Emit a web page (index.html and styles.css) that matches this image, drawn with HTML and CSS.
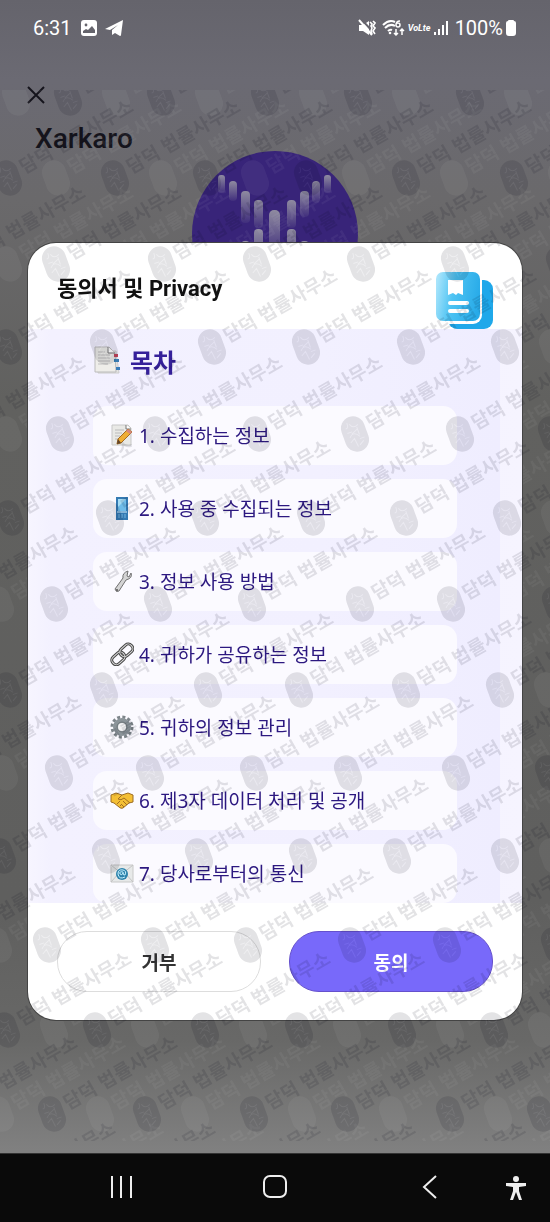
FILE: index.html
```html
<!DOCTYPE html>
<html lang="ko">
<head>
    <meta charset="UTF-8">
    <meta name="viewport" content="width=device-width, initial-scale=1.0">
    <title>Xarkaro</title>
    <link rel="stylesheet" href="styles.css">
</head>
<body>
    <div class="screen">
        <div class="status-bar">
            <span class="time">6:31</span>
            <svg class="status-photo" width="18" height="18" viewBox="0 0 18 18"><rect x="1" y="1" width="16" height="16" rx="3" fill="#fff"/><circle cx="6" cy="6" r="1.4" fill="#65646c"/><path d="M3 14v-2l3-2 2 1 4-4 3 4v3z" fill="#65646c"/></svg>
            <svg width="20" height="18" viewBox="0 0 20 18"><path d="M1 10L19 1l-2 15q0 1-1 1l-5-3-3 2v-5l6-5-8 5z" fill="#fff"/></svg>
            <span class="spacer"></span>
            <svg width="18" height="18" viewBox="0 0 18 18"><path d="M1 6h4l6-4v14l-6-4H1z" fill="#fff"/><path d="M3 0l14 15" stroke="#65646c" stroke-width="2"/><path d="M1 1l13 15" stroke="#fff" stroke-width="2"/><path d="M12 3l2 2-1 2 1 2-1 3 1 3M15 2l2 2-2 3 2 2-2 3 2 3" fill="none" stroke="#fff" stroke-width="1.6"/></svg>
            <svg class="wifi" width="24" height="18" viewBox="0 0 24 18"><path d="M2 6Q8 0 14 3M4 9q5-5 10-2M7 12q2-2 4-1" fill="none" stroke="#fff" stroke-width="2"/><circle cx="9" cy="14" r="1.3" fill="#fff"/><path d="M19 2q-4 0-4 4 0 2 2 2t2-2-2-2-2 1M15 10v6m-2-2l2 2 2-2M21 16v-6m-2 2l2-2 2 2" fill="none" stroke="#fff" stroke-width="1.5"/></svg>
            <span class="volte">VoLte</span>
            <svg width="16" height="18" viewBox="0 0 16 18"><path d="M2 13v3M6 10v6M10 6v10M14 2v14" stroke="#fff" stroke-width="2"/></svg>
            <span class="battery">100%</span>
            <svg width="12" height="18" viewBox="0 0 12 18"><path d="M3 2q0-1 1-1h4q1 0 1 1 2 0 2 2v10q0 3-3 3H4q-3 0-3-3V4q0-2 2-2z" fill="#fff"/></svg>
        </div>

        <main class="app">
            <button class="close" aria-label="닫기"><svg width="18" height="18" viewBox="0 0 18 18"><path d="M1 1l16 16M17 1L1 17" stroke="#15141c" stroke-width="2"/></svg></button>
            <h1>Xarkaro</h1>
            <svg class="logo" width="166" height="166" viewBox="0 0 166 166">
                <defs>
                    <linearGradient id="bar" x1="0" y1="0" x2="0" y2="1"><stop offset="0" stop-color="#8f8ba0"/><stop offset="1" stop-color="#8f8ba0" stop-opacity="0.1"/></linearGradient>
                </defs>
                <circle cx="83" cy="83" r="83" fill="#382479"/>
                <g fill="url(#bar)">
                    <rect x="26" y="24" width="7" height="18" rx="3"/>
                    <rect x="37" y="30" width="8" height="20" rx="4"/>
                    <rect x="49" y="40" width="9" height="32" rx="4"/>
                    <rect x="62" y="49" width="9" height="28" rx="4"/>
                    <rect x="77" y="59" width="11" height="44" rx="5"/>
                    <rect x="95" y="49" width="9" height="28" rx="4"/>
                    <rect x="108" y="40" width="9" height="26" rx="4"/>
                    <rect x="120" y="30" width="8" height="22" rx="4"/>
                    <rect x="132" y="24" width="7" height="18" rx="3"/>
                    <rect x="62" y="78" width="9" height="40" rx="4"/>
                    <rect x="95" y="78" width="9" height="40" rx="4"/>
                    <rect x="49" y="90" width="9" height="30" rx="4"/>
                    <rect x="108" y="90" width="9" height="30" rx="4"/>
                </g>
            </svg>
        </main>

        <nav class="nav-bar">
            <button aria-label="최근 앱"><svg width="24" height="24" viewBox="0 0 24 24"><path d="M3 1v22M12 1v22M22 1v22" stroke="#eee" stroke-width="2"/></svg></button>
            <button aria-label="홈"><svg width="24" height="24" viewBox="0 0 24 24"><rect x="1" y="1" width="22" height="21" rx="6" fill="none" stroke="#eee" stroke-width="2"/></svg></button>
            <button aria-label="뒤로"><svg width="24" height="24" viewBox="0 0 24 24"><path d="M19 1L7 12l12 11" fill="none" stroke="#eee" stroke-width="2"/></svg></button>
            <button class="access" aria-label="접근성"><svg width="20" height="25" viewBox="0 0 20 25"><circle cx="10" cy="3" r="3" fill="#eee"/><path d="M0 7h20v3l-7 1v4l3 9h-3l-3-8-3 8H4l3-9v-4l-7-1z" fill="#eee"/></svg></button>
        </nav>
    </div>

    <svg class="watermark" aria-hidden="true">
        <defs>
            <g id="stamp">
                <g transform="rotate(-20)">
                    <rect x="-12" y="-18" width="24" height="36" rx="12"/>
                    <path d="M-7-8q3 1 3-5M-2-11q2 6 8 3M-7-3h5M4-6v8M-6 2q5-6 10 2M-7 7l5-3 1 9M3 6h5M1 12l5-3M-3-1l7-3" class="stamp-lines"/>
                </g>
                <text x="16" y="5" transform="rotate(-30)">담덕 법률사무소</text>
            </g>
        </defs>
        <g id="lightMarks" class="light-marks"></g>
    </svg>

    <div class="backdrop">
        <section class="dialog" role="dialog" aria-labelledby="dialogTitle">
            <header class="dialog-header">
                <h2 id="dialogTitle">동의서 및 Privacy</h2>
                <svg width="58" height="58" viewBox="0 0 58 58">
                    <defs>
                        <linearGradient id="book" x1="0" y1="0.3" x2="1" y2="0.5"><stop offset="0" stop-color="#a9e4fb"/><stop offset="0.4" stop-color="#4dc3f3"/><stop offset="1" stop-color="#27aae8"/></linearGradient>
                    </defs>
                    <rect x="13" y="8" width="45" height="49" rx="9" fill="#1fa8ea"/>
                    <rect x="0" y="-2" width="47" height="54" rx="9" fill="#fff"/>
                    <rect x="1" y="0" width="44" height="49" rx="7" fill="url(#book)"/>
                    <path d="M13 8h15v15l-5-2-2 2-3-2-5 2z" fill="#fff"/>
                    <path d="M15 31h17M15 39h17" stroke="#fff" stroke-width="4" stroke-linecap="round"/>
                </svg>
            </header>

            <div class="terms">
                <div class="terms-inner">
                    <h3>
                        <svg width="30" height="30" viewBox="0 0 30 30"><path d="M5 5h18l3 22H5z" fill="#e4e4e2" stroke="#ccc"/><path d="M2 1h14l6 6 1 19H2z" fill="#eeede9" stroke="#bbb"/><path d="M15 1v6h7" fill="#fff" stroke="#777"/><path d="M5 6h7M5 9h12M5 12h12M5 15h12M5 18h10" stroke="#bfbfbf"/><path d="M21 8h4v3h-4z" fill="#c3455a"/><path d="M21 13h5v3h-5z" fill="#377bb0"/><path d="M23 21h4v3h-4z" fill="#397ebb"/></svg>
                        목차
                    </h3>
                    <ul>
                        <li><a href="#s1"><svg width="24" height="24" viewBox="0 0 24 24"><path d="M2 2h16l3 3v17H2z" fill="#e9e9e6" stroke="#c7c7c7"/><path d="M16 2v4h5" fill="#fff" stroke="#777"/><path d="M5 7h9M5 10h7M5 13h5M5 16h4" stroke="#bbb"/><path d="M18 6l4 3-11 11-4 1 1-5z" fill="#efae35" stroke="#a56b23"/><path d="M18 6l4 3-2 2-4-3z" fill="#d6867e"/><path d="M8 16l3 4-4 1z" fill="#61452a"/></svg>1. 수집하는 정보</a></li>
                        <li><a href="#s2"><svg width="24" height="24" viewBox="0 0 24 24"><rect x="6" y="1" width="12" height="23" fill="#347ab3"/><path d="M8 3h8v12H8z" fill="#6fbce9"/><path d="M8 3h8L8 11z" fill="#a5dcf5"/><path d="M7 16h10" stroke="#d3efff"/><path d="M8 19h8M8 21h8" stroke="#75b5df" stroke-dasharray="2 1"/></svg>2. 사용 중 수집되는 정보</a></li>
                        <li><a href="#s3"><svg width="24" height="24" viewBox="0 0 24 24"><path d="M5 20l8-11q-1-5 5-7l-1 5 2 1 2-4q2 5-5 7L9 22q-3 2-4-2z" fill="#d4d4d4" stroke="#707070"/><circle cx="7" cy="21" r="1" fill="#555"/></svg>3. 정보 사용 방법</a></li>
                        <li><a href="#s4"><svg width="24" height="24" viewBox="0 0 24 24"><g fill="none" stroke="#454545" stroke-width="3"><rect x="9" y="4" width="14" height="9" rx="4" transform="rotate(-42 16 8)"/><rect x="1" y="12" width="14" height="9" rx="4" transform="rotate(-42 8 16)"/></g><g fill="none" stroke="#ddd"><rect x="9" y="4" width="14" height="9" rx="4" transform="rotate(-42 16 8)"/><rect x="1" y="12" width="14" height="9" rx="4" transform="rotate(-42 8 16)"/></g></svg>4. 귀하가 공유하는 정보</a></li>
                        <li><a href="#s5"><svg width="24" height="24" viewBox="0 0 24 24"><circle cx="12" cy="12" r="10" fill="none" stroke="#7d858a" stroke-width="3" stroke-dasharray="3 2.24"/><circle cx="12" cy="12" r="6" fill="none" stroke="#8b9499" stroke-width="6"/><circle cx="12" cy="12" r="5" fill="none" stroke="#6f777b"/><circle cx="12" cy="12" r="4" fill="#f3f3f4"/></svg>5. 귀하의 정보 관리</a></li>
                        <li><a href="#s6"><svg width="24" height="24" viewBox="0 0 24 24"><path d="M1 7l5-2 6 2 6-2 5 2v7l-4 1-6 5q-2 1-4-1l-5-4-3-1z" fill="#f4bf35" stroke="#9c6c24"/><path d="M12 7l-4 4q3 2 6-1l6 5M10 18l2-2M7 16l3-3M14 19l-3-3M17 17l-4-4" fill="none" stroke="#a16e22"/></svg>6. 제3자 데이터 처리 및 공개</a></li>
                        <li><a href="#s7"><svg width="24" height="24" viewBox="0 0 24 24"><path d="M1 4h22v17H1z" fill="#e7e9e9" stroke="#c8c8c8"/><path d="M1 4l11 9 11-9M1 21l9-10M23 21l-9-10" fill="none" stroke="#c4c4c4"/><circle cx="12" cy="13" r="6" fill="#2e83ac"/><path d="M15 16q-6 3-7-3 0-5 5-4 4 1 2 5-2 1-2-3-4-1-3 2 2 2 3-1" fill="none" stroke="#c6f1ff"/></svg>7. 당사로부터의 통신</a></li>
                    </ul>
                </div>
            </div>

            <footer class="dialog-footer">
                <button class="button decline">거부</button>
                <button class="button agree">동의</button>
            </footer>
        </section>
    </div>

    <svg class="watermark" aria-hidden="true">
        <g id="darkMarks" class="dark-marks"></g>
    </svg>

    <script>
        // stamp centres, one entry per row: y, then the x positions
        var rows = [
            [98, [-32, 68, 161, 265, 358, 470]],
            [178, [8, 115, 207, 308, 406, 514]],
            [264, [-40, 56, 162, 257, 361, 455, 560]],
            [347, [8, 104, 212, 306, 411, 505]],
            [434, [-40, 60, 157, 257, 355, 460, 552]],
            [518, [10, 110, 205, 311, 404, 507]],
            [604, [-48, 54, 158, 252, 360, 451, 556]],
            [690, [8, 104, 208, 299, 406, 500]],
            [773, [-44, 59, 150, 254, 348, 456, 549]],
            [856, [2, 106, 199, 303, 397, 505]],
            [945, [-50, 47, 155, 248, 352, 447, 555]],
            [1030, [6, 97, 205, 299, 402, 494]],
            [1114, [-48, 52, 147, 254, 345, 450, 541]],
            [1200, [-10, 90, 195, 290, 400, 490]]
        ];

        function drawMarks(id, shift) {
            var group = document.getElementById(id);
            rows.forEach(function(row) {
                row[1].forEach(function(x) {
                    var mark = document.createElementNS("http://www.w3.org/2000/svg", "use");
                    mark.setAttribute("href", "#stamp");
                    mark.setAttribute("x", x + shift);
                    mark.setAttribute("y", row[0]);
                    group.appendChild(mark);
                });
            });
        }

        drawMarks("lightMarks", 48);
        drawMarks("darkMarks", 0);
    </script>
</body>
</html>
```
FILE: styles.css
```css
* {
    box-sizing: border-box;
}
body {
    margin: 0;
    font-family: Roboto, "Noto Sans CJK KR", sans-serif;
    background-color: #0a0a0a;
}
h1, h2, h3, ul {
    margin: 0;
    padding: 0;
}
button {
    font-family: inherit;
    cursor: pointer;
}
svg {
    display: block;
    flex-shrink: 0;
}
.screen {
    display: flex;
    flex-direction: column;
    min-height: 100vh;
    background: linear-gradient(#65646c 0, #6b6a73 80px, #6a696b 200px, #61615f 400px, #5f5f5e 900px, #686867 1040px, #808080 1150px);
}
.status-bar {
    display: flex;
    align-items: center;
    height: 56px;
    padding: 0 33px;
    color: #fff;
    font-size: 20px;
}
.status-photo {
    margin: 0 6px 0 8px;
}
.spacer {
    flex: 1;
}
.wifi {
    margin: 0 3px 0 5px;
}
.volte {
    width: 25px;
    font-size: 9px;
    font-style: italic;
    font-weight: bold;
}
.battery {
    margin: 0 2px 0 6px;
}
.app {
    flex: 1;
    padding: 30px 27px 0;
}
.close {
    display: block;
    padding: 0;
    border: none;
    background: none;
}
h1 {
    padding: 18px 0 0 8px;
    font-size: 28px;
    line-height: 34px;
    font-weight: 500;
    color: #15141c;
}
.logo {
    margin: -5px auto 0;
}
.nav-bar {
    position: relative;
    display: grid;
    grid-template-columns: repeat(3, 1fr);
    height: 69px;
    padding: 0 44px 3px;
    border-top: 1px solid #333;
    background-color: #0a0a0a;
}
.nav-bar button {
    display: flex;
    align-items: center;
    justify-content: center;
    padding: 0;
    border: none;
    background: none;
}
.nav-bar .access {
    position: absolute;
    right: 24px;
    top: 22px;
}
.watermark {
    position: absolute;
    top: 0;
    left: 0;
    width: 100%;
    height: 100vh;
    clip-path: inset(90px 0 81px 0);
    pointer-events: none;
    font-family: "Noto Sans CJK KR", sans-serif;
    font-size: 19px;
    font-weight: bold;
}
.stamp-lines {
    fill: none;
    stroke: #fff;
    stroke-opacity: 0.4;
}
.dark-marks {
    fill: #000018;
    opacity: 0.11;
}
.light-marks {
    fill: #fff;
    opacity: 0.05;
}
.backdrop {
    position: absolute;
    top: 0;
    left: 0;
    display: flex;
    align-items: center;
    width: 100%;
    height: 100vh;
    padding: 41px 28px 0;
}
.dialog {
    width: 100%;
    overflow: hidden;
    border-radius: 28px;
    background-color: #fff;
    box-shadow: 0 0 0 1px #444;
}
.dialog-header {
    display: flex;
    align-items: flex-start;
    justify-content: space-between;
    height: 86px;
    padding: 29px 29px 0;
}
h2 {
    font-size: 22px;
    line-height: 34px;
    color: #111;
}
.terms {
    height: 47vh;
    padding: 0 22px;
    overflow: hidden;
    background: linear-gradient(90deg, #f7f5ff, #f0eeff 40px, #f6f4ff);
}
.terms-inner {
    padding: 14px 43px;
    background: linear-gradient(90deg, #f3f1ff, #f2f0ff 60%, #efedff);
}
h3 {
    display: flex;
    align-items: center;
    gap: 7px;
    height: 36px;
    margin-bottom: 27px;
    font-size: 25px;
    color: #35209a;
}
ul {
    display: flex;
    flex-direction: column;
    gap: 14px;
    list-style: none;
}
li a {
    display: flex;
    align-items: center;
    gap: 5px;
    height: 59px;
    padding: 0 17px;
    border-radius: 14px;
    background-color: #fbfaff;
    font-family: "Noto Sans", "Noto Sans CJK KR", sans-serif;
    font-size: 19px;
    color: #2c1880;
    text-decoration: none;
}
.dialog-footer {
    display: flex;
    gap: 28px;
    padding: 28px 29px;
}
.button {
    flex: 1;
    height: 61px;
    padding: 0;
    border: 1px solid #ddd;
    border-radius: 30px;
    background-color: #fff;
    font-size: 19px;
    font-weight: bold;
    color: #333;
}
.button.agree {
    border-color: #6550cc;
    background-color: #7869fa;
    color: #fff;
}
```
